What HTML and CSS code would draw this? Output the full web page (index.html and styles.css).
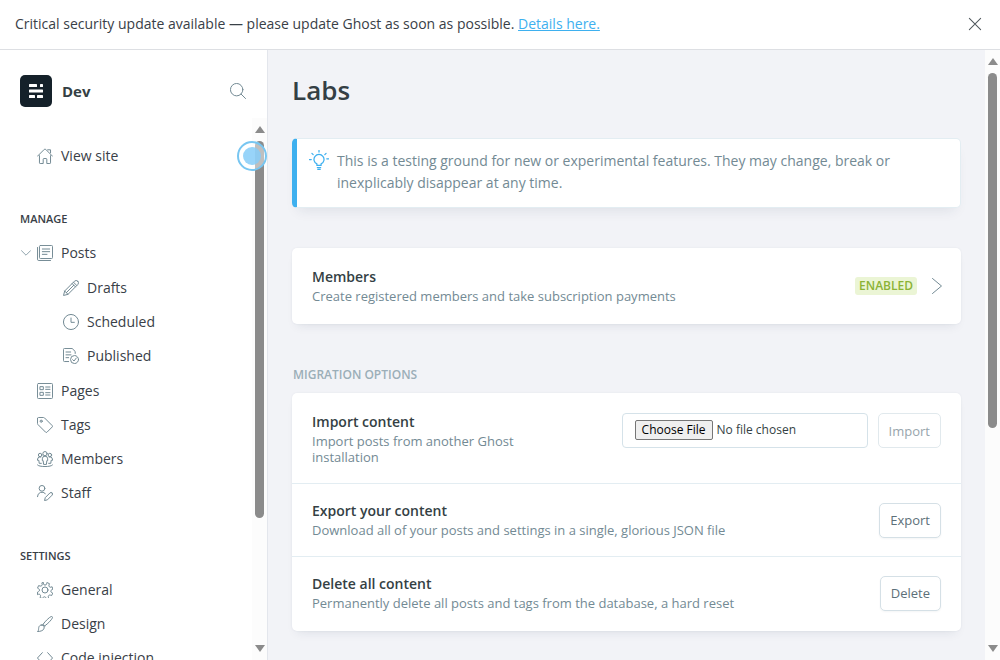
FILE: index.html
```html
<!DOCTYPE html>
<html lang="en">
<head>
<meta charset="utf-8">
<title>Labs - Dev</title>
<link rel="stylesheet" href="styles.css">
</head>
<body>
<aside class="notice">
  <p>Critical security update available — please update Ghost as soon as possible. <a href="#">Details here.</a></p>
  <button class="icon-button" type="button" aria-label="Close"><svg class="close-icon" viewBox="0 0 24 24"><path d="M4.500 4.500l15 15M19.500 4.500l-15 15"/></svg></button>
</aside>
<div class="app">
  <nav class="sidebar">
    <header class="site">
      <svg class="logo" viewBox="0 0 32 32"><rect width="32" height="32" rx="5" fill="#15212a"/><g fill="#fff"><rect x="9" y="9" width="8" height="3" rx=".6"/><rect x="20" y="9" width="3" height="3" rx=".6"/><rect x="9" y="14.500" width="14" height="3" rx=".6"/><rect x="9" y="20" width="6" height="3" rx=".6"/><rect x="17" y="20" width="6" height="3" rx=".6"/></g></svg>
      <span class="site-name">Dev</span>
      <button class="icon-button" type="button" aria-label="Search"><svg class="icon" viewBox="0 0 24 24"><circle cx="10" cy="10" r="9.300"/><path d="M16.700 16.700l6.600 6.600"/></svg></button>
    </header>
    <div class="nav-area">
      <div class="nav-scroll">
        <ul class="nav-list">
          <li><a href="#"><svg class="icon" viewBox="0 0 24 24"><path d="M.7 12.300L10.900 2.100a1.600 1.600 0 0 1 2.200 0l10.200 10.200M3.700 11.500v10.800a1 1 0 0 0 1 1h4.600v-6.500a1 1 0 0 1 1-1h3.400a1 1 0 0 1 1 1v6.500h4.600a1 1 0 0 0 1-1V11.500M16 2.700h4.300v4.500"/></svg>View site</a></li>
        </ul>
        <h2 class="nav-title">Manage</h2>
        <ul class="nav-list">
          <li><a class="expandable" href="#"><svg class="chevron" viewBox="0 0 10 6"><path d="M.5.7L5 5.200 9.500.7"/></svg><svg class="icon" viewBox="0 0 24 24"><rect x="3.700" y=".7" width="19.600" height="19.600" rx="1.500"/><path d="M.7 3.700v17.600a2 2 0 0 0 2 2h17.600M8 6h11M8 10h11M8 14h7"/></svg>Posts</a>
            <ul class="sub-list">
              <li><a href="#"><svg class="icon" viewBox="0 0 24 24"><path d="M22.200 1.800a3.500 3.500 0 0 0-5 0L2.500 16.500.8 23.200l6.700-1.700L22.200 6.800a3.500 3.500 0 0 0 0-5zM15.700 3.300l5 5M13.700 5.300l5 5M2.500 16.500l5 5M5 19L16.200 7.800"/></svg>Drafts</a></li>
              <li><a href="#"><svg class="icon" viewBox="0 0 24 24"><circle cx="12" cy="12" r="11.300"/><path d="M12 6v6.500h5"/></svg>Scheduled</a></li>
              <li><a href="#"><svg class="icon" viewBox="0 0 24 24"><circle cx="17.300" cy="17.300" r="6"/><path d="M14.500 17.500l2 2 3.500-4.500M8.500 20.300H2.200a1.500 1.500 0 0 1-1.500-1.500V2.200A1.500 1.500 0 0 1 2.200.7h11.500l4.600 4.500v3M4.500 6h7M4.500 10.300h7.500M4.500 14.500h4"/></svg>Published</a></li>
            </ul>
          </li>
          <li><a href="#"><svg class="icon" viewBox="0 0 24 24"><rect x=".7" y=".7" width="22.600" height="22.600" rx="1.500"/><rect x="5" y="5.500" width="4.500" height="4.500"/><rect x="5" y="14" width="4.500" height="4.500"/><path d="M13 6h6.500M13 9.500h6.500M13 14.500h6.500M13 18h6.500"/></svg>Pages</a></li>
          <li><a href="#"><svg class="icon" viewBox="0 0 24 24"><path d="M.7 2.200v7.600a2 2 0 0 0 .6 1.400l11.600 11.600a1.500 1.500 0 0 0 2.100 0l7.800-7.800a1.500 1.500 0 0 0 0-2.100L11.200 1.300A2 2 0 0 0 9.800.7H2.200A1.500 1.500 0 0 0 .7 2.200z"/><circle cx="6.300" cy="6.300" r="1.600"/></svg>Tags</a></li>
          <li><a href="#"><svg class="icon" viewBox="0 0 24 24"><circle cx="12" cy="4" r="3.200"/><circle cx="4.700" cy="6" r="2.600"/><circle cx="19.300" cy="6" r="2.600"/><path d="M9.800 19.500l-.5-5H8v-2.800a4 4 0 0 1 8 0v2.800h-1.300l-.5 5zM6.500 18.500H3.300l-.5-4.500H.8v-2a4 4 0 0 1 5-3.200M17.500 18.500h3.200l.5-4.500h2v-2a4 4 0 0 0-5-3.200M.7 21c1 1.400 5.500 2.300 11.300 2.300s10.300-.9 11.300-2.300"/></svg>Members</a></li>
          <li><a href="#"><svg class="icon" viewBox="0 0 24 24"><circle cx="7.500" cy="5" r="4.300"/><path d="M.7 17.500a6.800 6.800 0 0 1 11.800-4.600M22.600 11.900a2.300 2.300 0 0 0-3.200 0l-7 7-1.100 4.400 4.400-1.100 7-7a2.300 2.300 0 0 0-.1-3.300z"/></svg>Staff</a></li>
        </ul>
        <h2 class="nav-title">Settings</h2>
        <ul class="nav-list">
          <li><a href="#"><svg class="icon" viewBox="0 0 24 24"><circle cx="12" cy="12" r="4.500"/><path d="M9.600 2.300a2.400 2.400 0 0 0 4.800 0l.4-1.500 3.800 1.600-.6 2.200a2.400 2.400 0 0 0 3.100 3.100l1.500-.6 1.200 3.700-1.600.8a2.400 2.400 0 0 0 0 4.400l1.400.7-1.600 3.600-2-.6a2.400 2.400 0 0 0-3 3.100l.6 1.500-3.500.9-.8-1.600a2.400 2.400 0 0 0-4.400 0l-.7 1.400-3.600-1.600.6-2a2.400 2.400 0 0 0-3.100-3l-1.500.6L.8 15.200l1.500-.8a2.400 2.400 0 0 0 0-4.400L.8 9.200l1.600-3.800 2.200.6a2.400 2.400 0 0 0 3.100-3.100L7.200 1.400 9 .7z"/></svg>General</a></li>
          <li><a href="#"><svg class="icon" viewBox="0 0 24 24"><path d="M9 12.500C13 7 18 2.500 21 .9c1.700-.6 2.800.7 2 2.200C21.500 6 17 11 11.500 15zM9 12.500l2.500 2.500M6.300 13.500c1.500-.8 5 1.500 4.500 4.500-.6 3.800-5.500 5.300-10.100 5.300 2.300-1.800 1.300-3.400 2-6.300.4-1.900 1.800-3.300 3.600-3.500z"/></svg>Design</a></li>
          <li><a href="#"><svg class="icon" viewBox="0 0 24 24"><path d="M8 4L.7 12 8 20M16 4l7.300 8L16 20"/></svg>Code injection</a></li>
        </ul>
      </div>
      <div class="scrollbar" aria-hidden="true"><i class="arrow-up"></i><div class="track"><div class="thumb" style="height:76%"></div></div><i class="arrow-down"></i></div>
    </div>
    <svg class="pointer" viewBox="0 0 30 30" aria-hidden="true"><circle cx="15" cy="15" r="14" fill="#fff" fill-opacity=".45" stroke="#78c6f1" stroke-width="2"/><circle cx="15" cy="15" r="9" fill="#86cdf8" fill-opacity=".85"/></svg>
  </nav>
  <main class="main">
    <div class="content">
      <h1>Labs</h1>
      <section class="callout">
        <svg class="bulb" viewBox="0 0 24 24"><path d="M9.500 18.500v-1.800a6 6 0 1 1 5 0v1.800zM10 21h4M10.500 23.200h3M12 .5v2M3.500 4l1.500 1.500M20.500 4L19 5.500M.5 11.500h2.200M21.300 10.500h2.200"/></svg>
        <p>This is a testing ground for new or experimental features. They may change, break or inexplicably disappear at any time.</p>
      </section>
      <section class="card feature">
        <div class="text"><h3>Members</h3><p>Create registered members and take subscription payments</p></div>
        <span class="badge">Enabled</span>
        <button class="icon-button" type="button" aria-label="Open Members"><svg class="next" viewBox="0 0 10 16"><path d="M.5.5L9.500 8 .5 15.500"/></svg></button>
      </section>
      <h2 class="section-title">Migration options</h2>
      <section class="card">
        <div class="row row-import">
          <div class="text"><h3 id="import-title">Import content</h3><p>Import posts from another Ghost installation</p></div>
          <form class="import-form">
            <input type="file" aria-labelledby="import-title">
            <button class="btn" type="button" disabled>Import</button>
          </form>
        </div>
        <div class="row">
          <div class="text"><h3>Export your content</h3><p>Download all of your posts and settings in a single, glorious JSON file</p></div>
          <button class="btn" type="button">Export</button>
        </div>
        <div class="row">
          <div class="text"><h3>Delete all content</h3><p>Permanently delete all posts and tags from the database, a hard reset</p></div>
          <button class="btn" type="button">Delete</button>
        </div>
      </section>
    </div>
    <div class="scrollbar" aria-hidden="true"><i class="arrow-up"></i><div class="track"><div class="thumb" style="height:63%"></div></div><i class="arrow-down"></i></div>
  </main>
</div>
</body>
</html>
```
FILE: styles.css
```css
* { box-sizing: border-box; }
body {
  margin: 0;
  height: 100vh;
  display: flex;
  flex-direction: column;
  overflow: hidden;
  background: #fff;
  color: #394047;
  font: 14px/20px "Segoe UI", "Open Sans", "Noto Sans", sans-serif;
}
h1, h2, h3, p, ul { margin: 0; padding: 0; }
ul { list-style: none; }
a { color: inherit; text-decoration: none; }
button { font: inherit; color: inherit; }
svg { fill: none; stroke-linecap: round; stroke-linejoin: round; flex: none; }

.icon-button { display: flex; padding: 0; border: 0; background: none; }
.icon { width: 16px; height: 16px; stroke: #738a94; stroke-width: 1.5; }

.notice {
  flex: none;
  display: flex;
  align-items: center;
  justify-content: space-between;
  height: 50px;
  padding: 0 16px 2px 15px;
  border-bottom: 1px solid #dddfe3;
}
.notice a { color: #3eb0ef; text-decoration: underline; }
.close-icon { width: 18px; height: 18px; stroke: #50585d; stroke-width: 1.4; }

.app { flex: 1; min-height: 0; display: flex; }

.sidebar {
  position: relative;
  flex: none;
  width: 268px;
  display: flex;
  flex-direction: column;
  border-right: 1px solid #e3e6ec;
}
.site { display: flex; align-items: center; height: 68px; padding: 14px 21px 0 20px; }
.logo { width: 32px; height: 32px; }
.site-name { flex: 1; padding-left: 10px; font-size: 15px; font-weight: 700; color: #343f44; }
.nav-area { flex: 1; min-height: 0; display: flex; }
.nav-scroll { flex: 1; overflow: hidden; padding-top: 21px; }
.nav-list a { display: flex; align-items: center; gap: 8px; height: 34px; padding-left: 37px; }
.nav-list .expandable { gap: 0; padding-left: 21px; }
.expandable .icon { margin: 0 8px 0 6px; }
.chevron { width: 10px; height: 6px; stroke: #90a4ad; }
.sub-list { padding: 1px 0; }
.nav-list .sub-list a { padding-left: 63px; }
.nav-title {
  margin: 36px 0 7px;
  padding-left: 20px;
  font-size: 11px;
  line-height: 20px;
  font-weight: 600;
  text-transform: uppercase;
}

.scrollbar {
  flex: none;
  width: 15px;
  display: flex;
  flex-direction: column;
  align-items: center;
  justify-content: space-between;
  gap: 8px;
  padding: 8px 0;
  background: #fcfcfc;
}
.track { flex: 1; width: 9px; }
.thumb { border-radius: 5px; background: #8b8b8b; }
.arrow-up, .arrow-down { border: 5px solid transparent; }
.arrow-up { border-top: 0; border-bottom: 7px solid #8b8b8b; }
.arrow-down { border-bottom: 0; border-top: 7px solid #8b8b8b; }

.pointer { position: absolute; top: 91px; right: 0; width: 30px; height: 30px; }

.main { flex: 1; min-width: 0; display: flex; background: #f2f3f7; }
.content { flex: 1; min-width: 0; overflow: hidden; padding: 24px; }
h1 { font-size: 26px; line-height: 32px; font-weight: 600; color: #343f44; }

.callout {
  display: flex;
  gap: 8px;
  margin-top: 32px;
  padding: 11px 64px 13px 12px;
  border: 1px solid #e3edf2;
  border-left: 5px solid #3eb0ef;
  border-radius: 5px;
  background: #fff;
  box-shadow: 0 8px 12px -6px rgba(30, 50, 80, .1);
  color: #738a94;
  line-height: 22px;
}
.bulb { width: 20px; height: 20px; stroke: #3eb0ef; stroke-width: 1.5; }

.card {
  border-radius: 5px;
  background: #fff;
  box-shadow: 0 0 2px rgba(30, 50, 80, .08), 0 6px 10px -5px rgba(30, 50, 80, .1);
}
.feature { display: flex; align-items: center; gap: 15px; margin-top: 40px; padding: 20px; }
.text { flex: 1; min-width: 0; }
h3 { margin-bottom: 2px; font-size: 14px; line-height: 18px; font-weight: 600; color: #343f44; }
.text p { font-size: 13px; line-height: 16px; color: #738a94; }
.badge {
  padding: 0 4px;
  border-radius: 3px;
  background: #ebf5d5;
  color: #8bb336;
  font-size: 12px;
  line-height: 18px;
  font-weight: 600;
  text-transform: uppercase;
}
.next { width: 10px; height: 16px; margin-right: -1px; stroke: #738a94; }

.section-title {
  margin: 41px 0 8px 1px;
  font-size: 12px;
  line-height: 20px;
  font-weight: 600;
  color: #9baeb8;
  text-transform: uppercase;
}
.row { display: flex; align-items: center; gap: 20px; padding: 18px 20px; }
.row + .row { border-top: 1px solid #e3edf2; }
.row-import { align-items: flex-start; gap: 60px; padding: 20px 20px 18px; }
.row:last-child { padding-bottom: 20px; }
.import-form { display: flex; gap: 10px; }
.import-form input {
  width: 246px;
  height: 35px;
  padding: 6px 12px;
  border: 1px solid #d5e2e9;
  border-radius: 4px;
  color: #343f44;
  font: inherit;
  font-size: 12px;
}
.import-form input::file-selector-button {
  height: 20px;
  margin-right: 4px;
  padding: 0 6px;
  border: 1px solid #767676;
  border-radius: 2px;
  background: #efefef;
  color: #000;
  font: inherit;
  line-height: 18px;
}
.btn {
  height: 35px;
  padding: 0 10px;
  border: 1px solid #d5e0e6;
  border-radius: 5px;
  background: #fff;
  box-shadow: 0 1px 2px rgba(30, 50, 80, .05);
  color: #5d7079;
  font-size: 13px;
}
.btn:disabled { border-color: #e1e9ed; box-shadow: none; color: #97a5ac; }
```
